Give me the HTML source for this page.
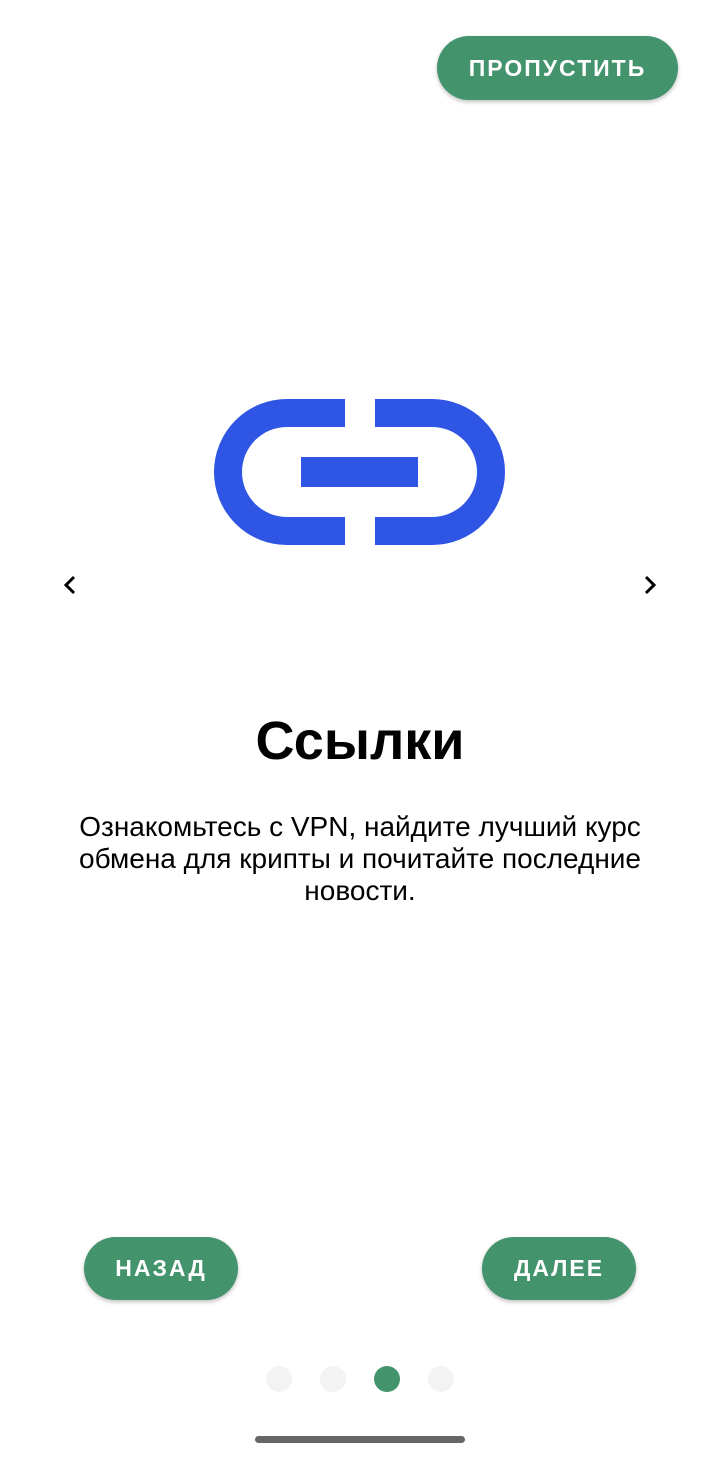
<!DOCTYPE html>
<html><head><meta charset="utf-8"><style>
body{margin:0;width:720px;height:1462px;background:#fff;font-family:"Liberation Sans",sans-serif;position:relative;overflow:hidden}
.btn{position:absolute;background:#43936C;color:#fff;border-radius:32px;display:flex;align-items:center;justify-content:center;font-size:23px;letter-spacing:2px;font-weight:bold;box-shadow:0 2px 4px rgba(0,0,0,.25)}
.dot{position:absolute;top:1366px;width:26px;height:26px;border-radius:50%;background:#f3f3f3}
</style></head><body>
<div class="btn" style="left:437px;top:36px;width:241px;height:64px">ПРОПУСТИТЬ</div>
<svg width="720" height="620" style="position:absolute;left:0;top:0">
<path fill="#2E55E3" d="M345,399 H287 A73,73 0 0 0 287,545 H345 V517 H287 A45,45 0 0 1 287,427 H345 Z"/>
<path fill="#2E55E3" d="M375,399 H432 A73,73 0 0 1 432,545 H375 V517 H432 A45,45 0 0 0 432,427 H375 Z"/>
<rect x="301" y="457" width="117" height="30" fill="#2E55E3"/>
<path d="M74,577 L66,585 L74,593" fill="none" stroke="#000" stroke-width="3"/>
<path d="M646,577 L654,585 L646,593" fill="none" stroke="#000" stroke-width="3"/>
</svg>
<div style="position:absolute;top:710px;width:720px;text-align:center;font-size:54px;font-weight:bold">Ссылки</div>
<div style="position:absolute;top:811px;left:40px;width:640px;text-align:center;font-size:28px;line-height:32px">Ознакомьтесь с VPN, найдите лучший курс<br>обмена для крипты и почитайте последние<br>новости.</div>
<div class="btn" style="left:84px;top:1237px;width:154px;height:63px">НАЗАД</div>
<div class="btn" style="left:482px;top:1237px;width:154px;height:63px">ДАЛЕЕ</div>
<div class="dot" style="left:266px"></div>
<div class="dot" style="left:320px"></div>
<div class="dot" style="left:374px;background:#43936C"></div>
<div class="dot" style="left:428px"></div>
<div style="position:absolute;left:255px;top:1436px;width:210px;height:7px;border-radius:4px;background:#666"></div>
</body></html>
